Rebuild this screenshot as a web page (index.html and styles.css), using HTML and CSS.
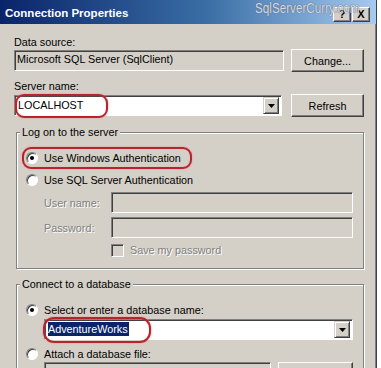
FILE: index.html
```html
<html lang="en">
<head>
  <meta charset="UTF-8" />
  <title>Connection Properties</title>
  <link rel="stylesheet" href="styles.css">
</head>
<body>

<div class="dialog">
  <div class="titlebar">
    <span class="title">Connection Properties</span>
    <div class="caption_btns">
      <span class="cbtn">?</span>
      <span class="cbtn cbtn_close">X</span>
    </div>
    <span class="watermark">SqlServerCurry.com</span>
  </div>

  <div class="body">
    <div class="label">Data source:</div>
    <div class="row">
      <div class="textbox readonly">Microsoft SQL Server (SqlClient)</div>
      <button class="btn" type="button">Change...</button>
    </div>

    <div class="label label_gap">Server name:</div>
    <div class="row row_server">
      <div class="combo">
        <span class="combo_text">LOCALHOST</span>
        <span class="dropbtn"><svg width="7" height="4" viewBox="0 0 7 4"><path d="M0 0h7L3.5 4z" fill="#000"/></svg></span>
      </div>
      <button class="btn" type="button">Refresh</button>
      <span class="mark mark_server"></span>
    </div>

    <fieldset class="group">
      <legend>Log on to the server</legend>
      <div class="radio_row">
        <span class="radio checked"></span>Use Windows Authentication
        <span class="mark mark_auth"></span>
      </div>
      <div class="radio_row radio_gap">
        <span class="radio"></span>Use SQL Server Authentication
      </div>
      <div class="field_row">
        <span class="field_label disabled">User name:</span>
        <div class="textbox readonly"></div>
      </div>
      <div class="field_row">
        <span class="field_label disabled">Password:</span>
        <div class="textbox readonly"></div>
      </div>
      <div class="check_row">
        <span class="checkbox"></span><span class="disabled">Save my password</span>
      </div>
    </fieldset>

    <fieldset class="group group_db">
      <legend>Connect to a database</legend>
      <div class="radio_row">
        <span class="radio checked"></span>Select or enter a database name:
      </div>
      <div class="db_combo">
        <div class="combo">
          <span class="combo_text"><span class="selected">AdventureWorks</span></span>
          <span class="dropbtn"><svg width="7" height="4" viewBox="0 0 7 4"><path d="M0 0h7L3.5 4z" fill="#000"/></svg></span>
        </div>
        <span class="mark mark_db"></span>
      </div>
      <div class="radio_row radio_gap">
        <span class="radio"></span>Attach a database file:
      </div>
      <div class="row file_row">
        <div class="textbox readonly"></div>
        <button class="btn btn_small" type="button"></button>
      </div>
    </fieldset>
  </div>
</div>

</body>
</html>
```

FILE: styles.css
```css
*{box-sizing:border-box; margin:0; padding:0;}
body{background:#fff; width:381px; height:368px; overflow:hidden;
     font-family:"Liberation Sans", Arial, sans-serif; font-size:10.8px; color:#000;}

.dialog{width:377px; height:368px; background:#d4d0c8; border-right:1px solid #404040;
        box-shadow:inset -1px 0 #808080; overflow:hidden; display:flex; flex-direction:column;}

/* caption */
.titlebar{position:relative; height:24px; flex:none; display:flex; align-items:center;
          justify-content:space-between; padding:0 6px 0 5px;
          background:linear-gradient(to right, #0a246a 0%, #3a6ea5 55%, #a6caf0 100%);}
.title{color:#fff; font-weight:bold; font-size:11.5px; margin-top:2px;}
.caption_btns{display:flex; gap:1px; margin-top:4px;}
.cbtn{width:18px; height:15px; background:#d4d0c8; display:flex; align-items:center; justify-content:center;
      font-weight:bold; font-size:11px; line-height:1;
      border:1px solid; border-color:#fff #404040 #404040 #fff; box-shadow:inset -1px -1px #808080;}
.watermark{position:absolute; left:255px; top:-1px; font-size:15px; color:rgba(235,238,246,0.85);
           transform:scaleX(0.78); transform-origin:left top;
           text-shadow:0 0 1px #5d6a80, 0 0 1px #5d6a80; pointer-events:none;}

.body{flex:1; padding:11px 12px 0 14px;}
.label{height:14px; line-height:14px;}
.label_gap{margin-top:7px;}
.row{position:relative; display:flex; align-items:center; height:23px; gap:7px;}
.row_server{margin-top:1px; gap:9px;}

.textbox{flex:1; height:21px; line-height:17px; padding-left:2px; background:#fff;
         border:1px solid; border-color:#808080 #fff #fff #808080; box-shadow:inset 1px 1px #404040;
         white-space:nowrap; overflow:hidden;}
.readonly{background:#d4d0c8;}

.btn{width:73px; height:23px; flex:none; background:#d4d0c8; font:inherit; color:#000;
     border:1px solid; border-color:#fff #404040 #404040 #fff; box-shadow:inset -1px -1px #808080;}

.combo{flex:1; height:21px; display:flex; align-items:center; background:#fff;
       border:1px solid; border-color:#808080 #fff #fff #808080; box-shadow:inset 1px 1px #404040;
       padding:2px 2px 2px 3px;}
.combo_text{flex:1; line-height:15px; white-space:nowrap;}
.dropbtn{width:16px; height:17px; flex:none; background:#d4d0c8; display:flex; align-items:center; justify-content:center;
         border:1px solid; border-color:#d4d0c8 #404040 #404040 #d4d0c8; box-shadow:inset 1px 1px #fff, inset -1px -1px #808080;}
.selected{background:#0a246a; color:#fff; padding:1px 1px 1px 0;}

/* group boxes */
.group{position:relative; margin:8px 0 0 2px; padding:11px 10px 11px 9px;
       border:1px solid #808080; box-shadow:inset 1px 1px #fff, 1px 1px #fff;}
.group legend{margin-left:-6px; padding:0 2px; height:14px; line-height:14px; background:#d4d0c8;}
.group_db{margin-top:8px; padding-bottom:0;}

.radio_row{position:relative; display:flex; align-items:center; height:16px;}
.radio_gap{margin-top:6px;}
.radio{width:12px; height:12px; flex:none; margin-right:6px; border-radius:50%; background:#fff;
       border:1px solid; border-color:#808080 #fff #fff #808080; box-shadow:inset 1px 1px #404040;
       display:flex; align-items:center; justify-content:center;}
.radio.checked::after{content:""; width:4px; height:4px; border-radius:50%; background:#000;}

.field_row{display:flex; align-items:center; height:21px; margin:4px 0 0 18px;}
.field_label{width:67px; flex:none;}
.disabled{color:#808080; text-shadow:1px 1px #fff;}

.check_row{display:flex; align-items:center; height:14px; margin:5px 0 0 85px;}
.checkbox{width:13px; height:13px; margin-right:6px; background:#d4d0c8;
          border:1px solid; border-color:#808080 #fff #fff #808080; box-shadow:inset 1px 1px #404040;}

.db_combo{position:relative; display:flex; margin:1px 0 0 18px;}
.file_row{margin:0 0 0 18px; gap:7px; align-items:flex-start;}
.btn_small{width:75px;}

/* red highlight rings */
.mark{position:absolute; border:2px solid #b8232c; border-radius:9px;
      box-shadow:0 0 2px #e58a8f, inset 0 0 1px #e58a8f; pointer-events:none;}
.mark_server{left:1px; top:0; width:93px; height:24px;}
.mark_auth{left:-4px; top:-3px; width:170px; height:22px;}
.mark_db{left:-1px; top:-2px; width:108px; height:26px; border-radius:11px;}
```
